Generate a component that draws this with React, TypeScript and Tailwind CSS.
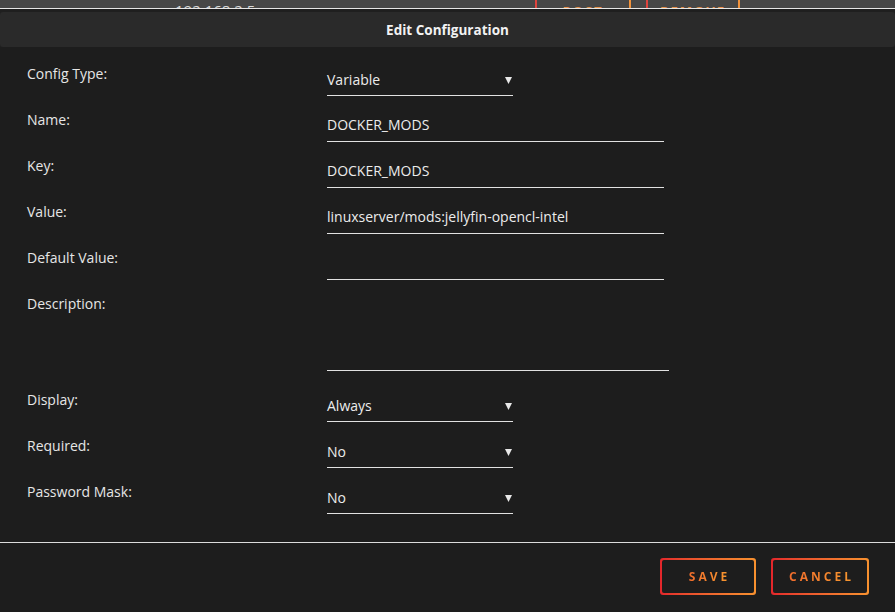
import React from 'react';

type Field = {
  label: string;
  value: string;
  kind: 'select' | 'text' | 'area';
};

const fields: Field[] = [
  { label: 'Config Type:', value: 'Variable', kind: 'select' },
  { label: 'Name:', value: 'DOCKER_MODS', kind: 'text' },
  { label: 'Key:', value: 'DOCKER_MODS', kind: 'text' },
  { label: 'Value:', value: 'linuxserver/mods:jellyfin-opencl-intel', kind: 'text' },
  { label: 'Default Value:', value: '', kind: 'text' },
  { label: 'Description:', value: '', kind: 'area' },
  { label: 'Display:', value: 'Always', kind: 'select' },
  { label: 'Required:', value: 'No', kind: 'select' },
  { label: 'Password Mask:', value: 'No', kind: 'select' },
];

const Caret = () => (
  <svg width="7" height="8" viewBox="0 0 7 8" className="mr-[1px]">
    <path d="M0 1 H7 L3.5 8 Z" fill="#e8e8e8" />
  </svg>
);

const FormRow: React.FC<{ field: Field }> = ({ field }) => {
  const rowH = field.kind === 'area' ? 'h-[96px]' : 'h-[46px]';
  return (
    <div className={`flex ${rowH}`}>
      <div className="w-[327px] pl-[27px] text-[14px] leading-[20px] text-[#e6e6e6]">{field.label}</div>
      {field.kind === 'select' && (
        <div className="w-[186px] h-[32px] pt-[6px] pb-[5px] border-b border-[#e2e2e2] flex items-center justify-between">
          <span className="text-[14px] leading-[20px] text-[#ececec]">{field.value}</span>
          <Caret />
        </div>
      )}
      {field.kind === 'text' && (
        <div className="w-[337px] h-[32px] pt-[5px] pb-[6px] border-b border-[#e2e2e2] flex items-center">
          <span className="text-[14px] leading-[20px] text-[#ececec]">{field.value}</span>
        </div>
      )}
      {field.kind === 'area' && <div className="w-[342px] h-[77px] border-b border-[#e2e2e2]" />}
    </div>
  );
};

const GradientButton: React.FC<{ label: string; width: string }> = ({ label, width }) => (
  <div className={`${width} h-[37px] rounded-[3px] p-[2px] bg-gradient-to-r from-[#e3252b] to-[#f7912f]`}>
    <div className="w-full h-full rounded-[2px] bg-[#1d1d1d] flex items-center justify-center">
      <span className="text-[12px] font-bold tracking-[3px] pl-[3px] bg-gradient-to-r from-[#f06a2c] to-[#f8982f] bg-clip-text text-transparent">
        {label}
      </span>
    </div>
  </div>
);

export default function App() {
  return (
    <div className="w-[895px] h-[612px] overflow-hidden bg-[#1d1d1d] flex flex-col" style={{ fontFamily: '"Open Sans", "Noto Sans", sans-serif' }}>
      {/* page behind the dialog */}
      <div className="h-[8px] shrink-0 bg-[#474747] overflow-hidden flex items-start">
        <div className="ml-[175px] w-[360px] shrink-0">
          <span className="block mt-[1px] text-[15px] leading-[18px] text-[#d8d8d8]">192.168.2.5</span>
        </div>
        <div className="w-[96px] shrink-0 h-[30px] border-l-2 border-l-[#e0443e] border-r-2 border-r-[#f2933c] flex justify-center">
          <span className="mt-[3px] text-[13px] leading-[16px] font-bold tracking-[2px] text-[#e8914a]">POST</span>
        </div>
        <div className="ml-[15px] w-[94px] shrink-0 h-[30px] border-l-2 border-l-[#e0443e] border-r-2 border-r-[#f2933c] flex justify-center">
          <span className="mt-[3px] text-[13px] leading-[16px] font-bold tracking-[2px] text-[#e8914a]">REMOVE</span>
        </div>
      </div>
      <div className="h-px shrink-0 bg-[#e6e6e6]" />

      {/* dialog */}
      <div className="flex-1 flex flex-col pt-[3px] bg-[#1f1f1f]">
        <div className="h-[35px] shrink-0 rounded-[3px] bg-[#2a2a2a] flex items-center justify-center">
          <span className="mt-[1px] text-[13.5px] font-bold text-[#f2f2f2]">Edit Configuration</span>
        </div>
        <div className="bg-[#1d1d1d] flex-1 flex flex-col">
          <div className="pt-[17px] pb-[14px]">
            {fields.map((f) => (
              <FormRow key={f.label} field={f} />
            ))}
          </div>
          <div className="h-px bg-[#dcdcdc]" />
          <div className="flex justify-end gap-[15px] pt-[15px] pr-[26px]">
            <GradientButton label="SAVE" width="w-[96px]" />
            <GradientButton label="CANCEL" width="w-[98px]" />
          </div>
        </div>
      </div>
    </div>
  );
}
